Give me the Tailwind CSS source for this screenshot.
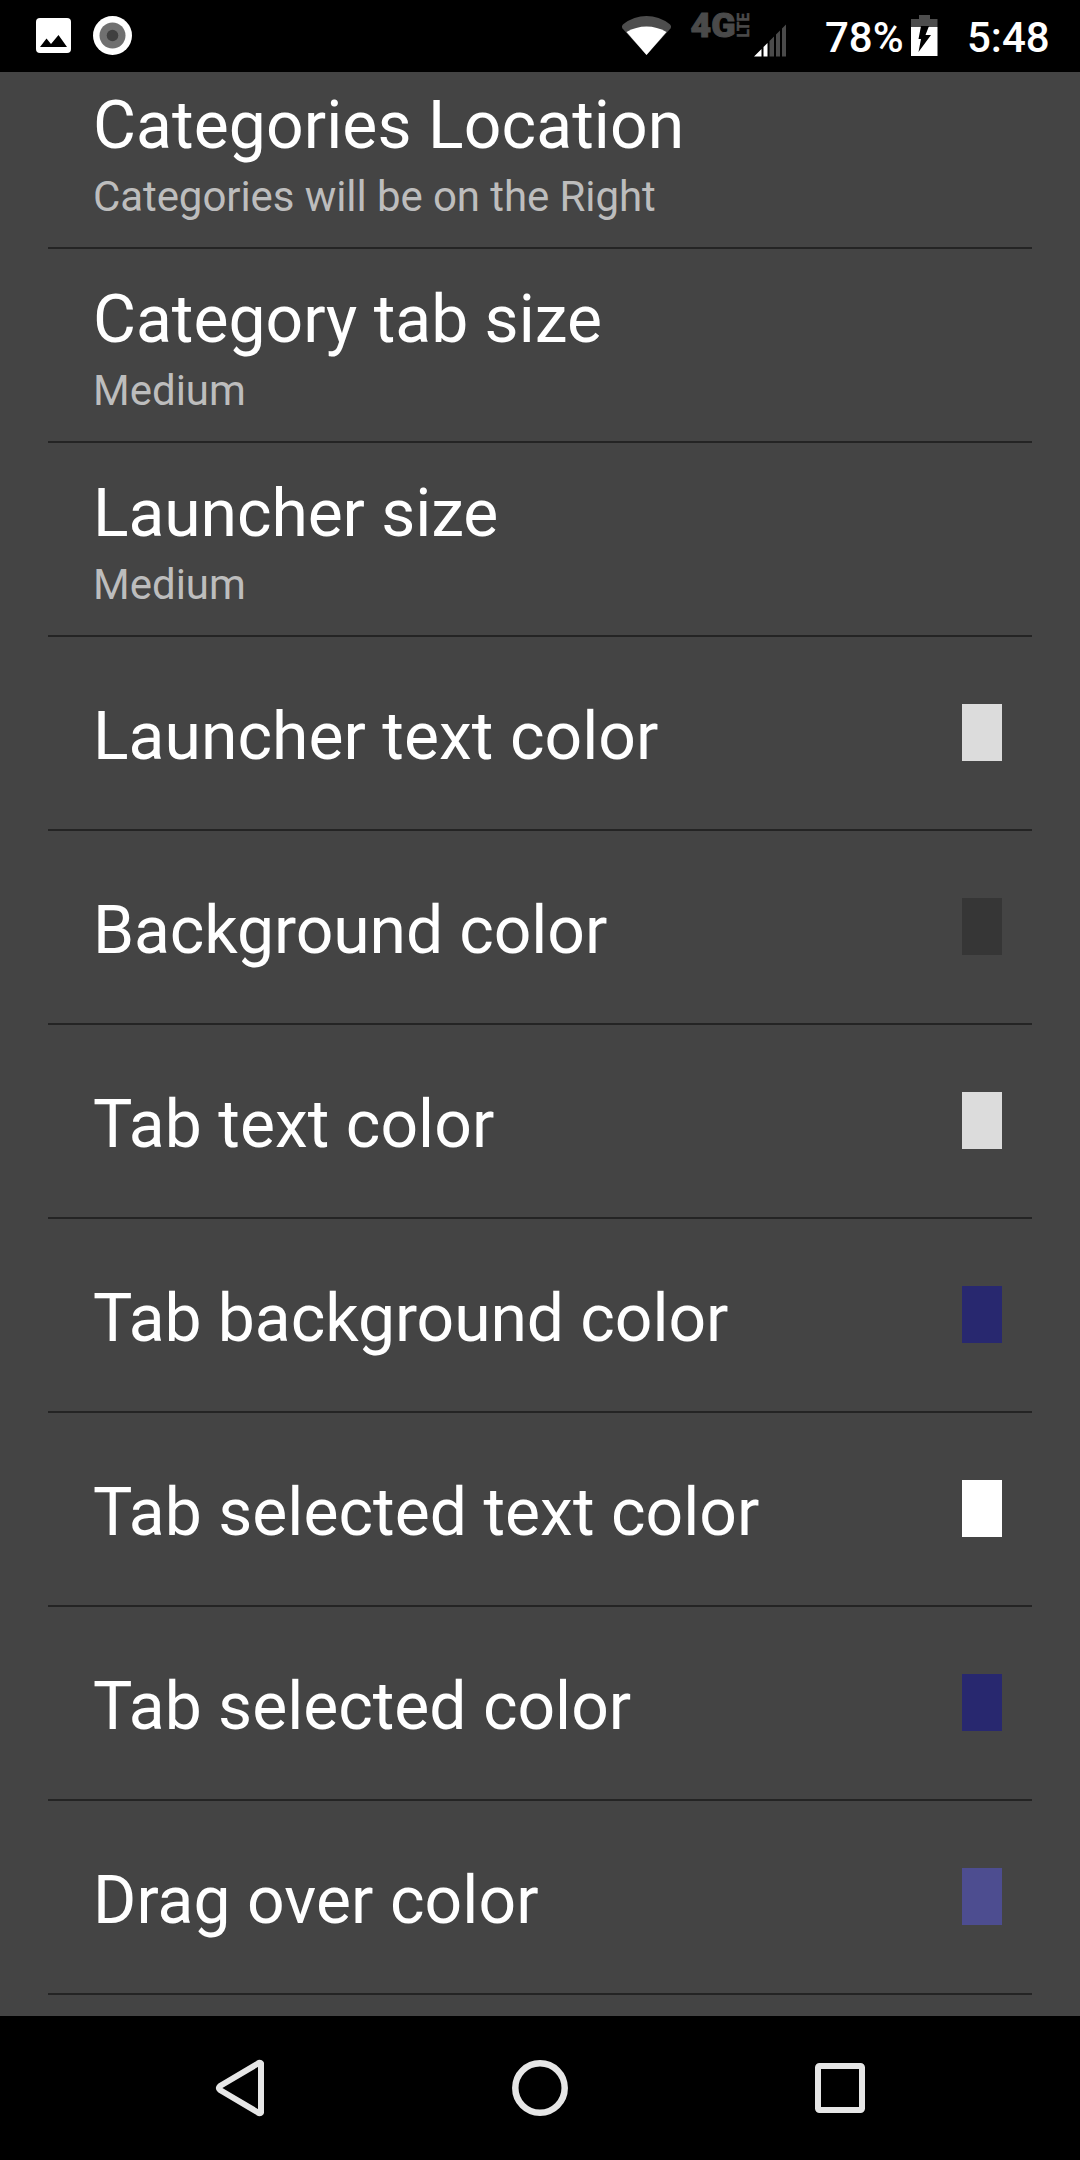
<!DOCTYPE html>
<html lang="en">
<head>
<meta charset="utf-8">
<title>Settings</title>
<script src="https://cdn.jsdelivr.net/npm/@tailwindcss/browser@4"></script>
</head>
<body class="bg-black font-['Roboto',sans-serif] text-white">
<div class="flex h-[2160px] w-[1080px] flex-col overflow-hidden">
  <!-- Status bar -->
  <header class="flex h-[72px] shrink-0 items-start bg-black pr-[31px] pl-9 text-[42px] leading-[75px] font-medium">
    <svg class="mt-[18px] h-[35px] w-[35px] shrink-0" viewBox="0 0 35 35"><rect width="35" height="35" rx="4" fill="#fff"/><path d="M4 29L10.500 20.500L15 26L22.500 17L31 29Z" fill="#000"/></svg>
    <svg class="mt-[16px] ml-[22px] h-[39px] w-[39px] shrink-0" viewBox="0 0 39 39"><circle cx="19.500" cy="19.500" r="19.500" fill="#fff"/><circle cx="19.500" cy="19.500" r="13" fill="#707070"/><circle cx="19.500" cy="19.500" r="5.800" fill="#404040"/></svg>
    <svg class="ml-auto h-[72px] w-[49px] shrink-0" viewBox="622 0 49 72"><path d="M646.500 55L622.500 28.500Q621 26 623.500 24Q634 16 646.500 16Q659 16 669.500 24Q672 26 670.500 28.500Z" fill="#4d4d4d"/><path d="M646.500 55L626.500 32Q636 26.500 646.500 26.500Q657 26.500 666.500 32Z" fill="#fff"/></svg>
    <svg class="ml-[20px] h-[72px] w-[62px] shrink-0 overflow-visible font-['Roboto',sans-serif] font-black" viewBox="691 0 62 72" fill="#4a4a4a" stroke="#4a4a4a"><text x="690.500" y="37" font-size="34" stroke-width="1" textLength="45" lengthAdjust="spacingAndGlyphs">4G</text><text transform="translate(749 37.500) rotate(-90)" font-size="16" font-weight="700" stroke-width="0.500" textLength="24.500" lengthAdjust="spacingAndGlyphs">LTE</text></svg>
    <svg class="ml-[1px] h-[72px] w-[33px] shrink-0" viewBox="754 0 33 72"><path d="M754 56.500L761.500 49V56.500ZM763.500 47L767.500 43V56.500H763.500Z" fill="#fff"/><path d="M769.500 41L774 36.500V56.500H769.500ZM776 34.500L780 30.500V56.500H776ZM782 28.500L786 24.500V56.500H782Z" fill="#4a4a4a"/></svg>
    <span class="ml-[38px] w-[86px] shrink-0 whitespace-nowrap">78%</span>
    <svg class="h-[72px] w-[27px] shrink-0" viewBox="911 0 27 72"><path d="M911 27V19H919V15H930V19H937.500V27Z" fill="#4d4d4d"/><path d="M911 27H937.500V56H911Z" fill="#fff"/><path d="M921 26H929L925.500 35H931L918.500 52L921 39H918.500Z" fill="#000"/></svg>
    <span class="ml-[29px] w-[82px] shrink-0 whitespace-nowrap">5:48</span>
  </header>

  <!-- Preferences, scrolled slightly past the top of the first row -->
  <main class="flex h-[1944px] shrink-0 flex-col overflow-hidden bg-[#444444] px-12 text-[66px] leading-[77px]">
    <section class="h-[177px] shrink-0 border-b-2 border-[#242424] pt-[15px] pl-[45px]">
      <h2 class="tracking-[0.1px]">Categories Location</h2>
      <p class="mt-2 text-[42px] leading-[49px] tracking-[-0.08px] text-[#bdbdbd]">Categories will be on the Right</p>
    </section>
    <section class="h-[194px] shrink-0 border-b-2 border-[#242424] pt-8 pl-[45px]">
      <h2>Category tab size</h2>
      <p class="mt-2 text-[42px] leading-[49px] text-[#bdbdbd]">Medium</p>
    </section>
    <section class="h-[194px] shrink-0 border-b-2 border-[#242424] pt-8 pl-[45px]">
      <h2 class="tracking-[-0.08px]">Launcher size</h2>
      <p class="mt-2 text-[42px] leading-[49px] text-[#bdbdbd]">Medium</p>
    </section>
    <section class="flex h-[194px] shrink-0 items-start justify-between border-b-2 border-[#242424] pr-[30px] pl-[45px]">
      <h2 class="mt-[61px] tracking-[0.05px]">Launcher text color</h2><div class="mt-[67px] h-[57px] w-10 bg-[#dcdcdc]"></div>
    </section>
    <section class="flex h-[194px] shrink-0 items-start justify-between border-b-2 border-[#242424] pr-[30px] pl-[45px]">
      <h2 class="mt-[61px] tracking-[-0.08px]">Background color</h2><div class="mt-[67px] h-[57px] w-10 bg-[#363636]"></div>
    </section>
    <section class="flex h-[194px] shrink-0 items-start justify-between border-b-2 border-[#242424] pr-[30px] pl-[45px]">
      <h2 class="mt-[61px] tracking-[0.05px]">Tab text color</h2><div class="mt-[67px] h-[57px] w-10 bg-[#dcdcdc]"></div>
    </section>
    <section class="flex h-[194px] shrink-0 items-start justify-between border-b-2 border-[#242424] pr-[30px] pl-[45px]">
      <h2 class="mt-[61px] tracking-[-0.06px]">Tab background color</h2><div class="mt-[67px] h-[57px] w-10 bg-[#28286f]"></div>
    </section>
    <section class="flex h-[194px] shrink-0 items-start justify-between border-b-2 border-[#242424] pr-[30px] pl-[45px]">
      <h2 class="mt-[61px] tracking-[0.04px]">Tab selected text color</h2><div class="mt-[67px] h-[57px] w-10 bg-white"></div>
    </section>
    <section class="flex h-[194px] shrink-0 items-start justify-between border-b-2 border-[#242424] pr-[30px] pl-[45px]">
      <h2 class="mt-[61px]">Tab selected color</h2><div class="mt-[67px] h-[57px] w-10 bg-[#28286f]"></div>
    </section>
    <section class="flex h-[194px] shrink-0 items-start justify-between border-b-2 border-[#242424] pr-[30px] pl-[45px]">
      <h2 class="mt-[61px] tracking-[0.08px]">Drag over color</h2><div class="mt-[67px] h-[57px] w-10 bg-[#4d4d90]"></div>
    </section>
  </main>

  <!-- Navigation bar -->
  <nav class="flex h-[144px] shrink-0 items-center justify-between bg-black px-[210px]">
    <svg class="h-[60px] w-[60px]" viewBox="210 2058 60 60" fill="none" stroke="#e6e6e6" stroke-width="6" stroke-linejoin="round"><path d="M261 2063.500V2112.500Q260 2114 258 2112.500L220 2090Q218 2088 220 2086L258 2063.500Q260 2062 261 2063.500Z"/></svg>
    <svg class="h-[60px] w-[60px]" viewBox="0 0 60 60" fill="none" stroke="#e6e6e6" stroke-width="6.500"><circle cx="30" cy="30" r="24.700"/></svg>
    <svg class="h-[60px] w-[60px]" viewBox="0 0 60 60" fill="none" stroke="#e6e6e6" stroke-width="6"><rect x="8" y="8" width="44" height="44" rx="1.500"/></svg>
  </nav>
</div>
</body>
</html>
